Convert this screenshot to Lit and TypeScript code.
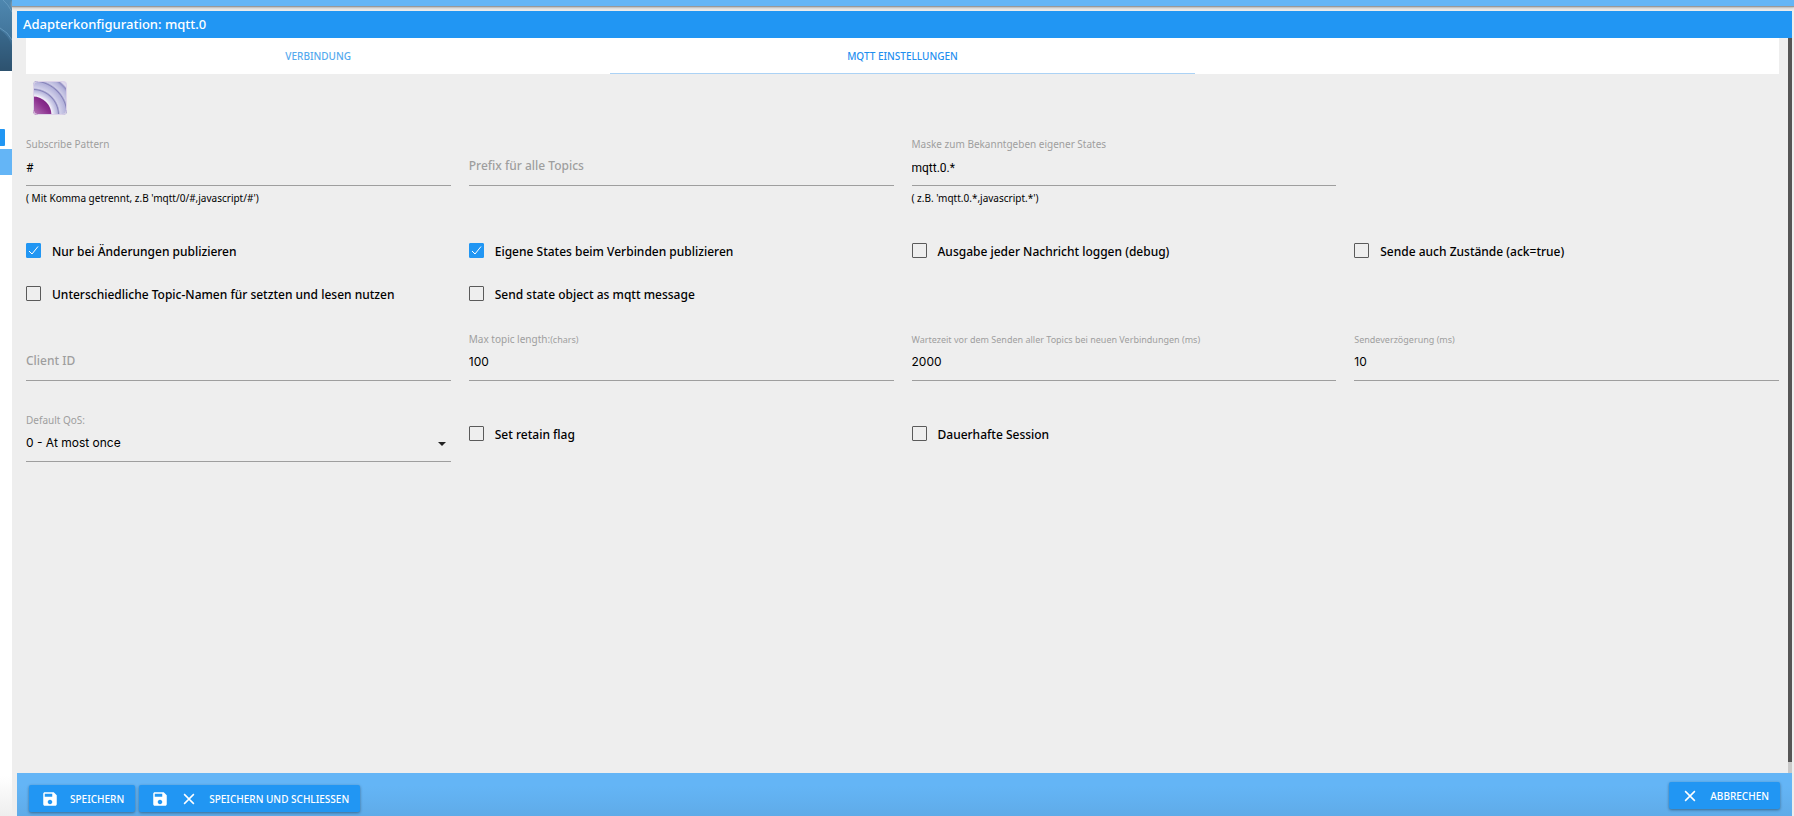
import { LitElement, html, css, nothing } from "lit";
import { customElement, property } from "lit/decorators.js";

const saveIcon = html`<svg class="icon" viewBox="0 0 24 24" aria-hidden="true">
  <path fill="#fff" d="M17 3H5c-1.110 0-2 .9-2 2v14c0 1.100.890 2 2 2h14c1.100 0 2-.9 2-2V7l-4-4zm-5 16c-1.660 0-3-1.340-3-3s1.340-3 3-3 3 1.340 3 3-1.340 3-3 3zm3-10H5V5h10v4z" />
</svg>`;

const closeIcon = html`<svg class="icon" viewBox="0 0 24 24" aria-hidden="true">
  <path fill="none" stroke="#fff" stroke-width="2" d="M5.500 5.500l13 13M18.500 5.500l-13 13" />
</svg>`;

const logo = html`<svg class="logo" viewBox="0 0 34 34" role="img" aria-label="MQTT">
  <defs>
    <clipPath id="tile"><rect width="34" height="34" rx="4" /></clipPath>
    <radialGradient id="waves" gradientUnits="userSpaceOnUse" cx="0" cy="34" r="50">
      <stop offset="0" stop-color="#f2f0f8" />
      <stop offset=".38" stop-color="#f2f0f8" />
      <stop offset=".42" stop-color="#d9d8ee" />
      <stop offset=".49" stop-color="#b9b8dd" />
      <stop offset=".51" stop-color="#8481b8" />
      <stop offset=".54" stop-color="#d2d1ea" />
      <stop offset=".66" stop-color="#b3b2da" />
      <stop offset=".68" stop-color="#8481b8" />
      <stop offset=".71" stop-color="#cccbe6" />
      <stop offset=".8" stop-color="#b3b2da" />
      <stop offset=".84" stop-color="#8f8cc0" />
      <stop offset=".87" stop-color="#e0dcee" />
      <stop offset="1" stop-color="#d5cfe6" />
    </radialGradient>
    <linearGradient id="core" x1="0" y1="1" x2="1" y2="0">
      <stop offset="0" stop-color="#b87cba" />
      <stop offset=".5" stop-color="#8c3190" />
      <stop offset="1" stop-color="#6a0f70" />
    </linearGradient>
  </defs>
  <g clip-path="url(#tile)">
    <rect width="34" height="34" fill="url(#waves)" />
    <path d="M0 15.500A18.500 18.500 0 0 1 18.500 34H0z" fill="url(#core)" />
    <rect x=".5" y=".5" width="33" height="33" rx="4" fill="none" stroke="#ddd3e8" stroke-width="1" />
  </g>
</svg>`;

interface Item {
  kind: "text" | "number" | "check" | "select";
  id: string;
  label: string;
  unit?: string;
  value?: string;
  help?: string;
  small?: boolean;
  checked?: boolean;
}

const rows: { name: string; items: Item[] }[] = [
  {
    name: "topics",
    items: [
      { kind: "text", id: "patterns", label: "Subscribe Pattern", value: "#", help: "( Mit Komma getrennt, z.B 'mqtt/0/#,javascript/#')" },
      { kind: "text", id: "prefix", label: "Prefix für alle Topics", value: "" },
      { kind: "text", id: "publish", label: "Maske zum Bekanntgeben eigener States", value: "mqtt.0.*", help: "( z.B. 'mqtt.0.*,javascript.*')" },
    ],
  },
  {
    name: "checks",
    items: [
      { kind: "check", id: "onchange", label: "Nur bei Änderungen publizieren", checked: true },
      { kind: "check", id: "publishAll", label: "Eigene States beim Verbinden publizieren", checked: true },
      { kind: "check", id: "debug", label: "Ausgabe jeder Nachricht loggen (debug)" },
      { kind: "check", id: "sendAck", label: "Sende auch Zustände (ack=true)" },
    ],
  },
  {
    name: "checks",
    items: [
      { kind: "check", id: "extraSet", label: "Unterschiedliche Topic-Namen für setzten und lesen nutzen" },
      { kind: "check", id: "stateObject", label: "Send state object as mqtt message" },
    ],
  },
  {
    name: "limits",
    items: [
      { kind: "text", id: "clientId", label: "Client ID", value: "" },
      { kind: "number", id: "maxTopic", label: "Max topic length:", unit: "(chars)", value: "100" },
      { kind: "number", id: "wait", label: "Wartezeit vor dem Senden aller Topics bei neuen Verbindungen (ms)", value: "2000", small: true },
      { kind: "number", id: "interval", label: "Sendeverzögerung (ms)", value: "10", small: true },
    ],
  },
  {
    name: "session",
    items: [
      { kind: "select", id: "qos", label: "Default QoS:" },
      { kind: "check", id: "retain", label: "Set retain flag" },
      { kind: "check", id: "persistent", label: "Dauerhafte Session" },
    ],
  },
];

@customElement("config-field")
export class ConfigField extends LitElement {
  @property({ attribute: false }) item!: Item;

  static styles = css`
    :host {
      display: block;
      min-width: 0;
    }
    .field {
      display: grid;
      grid-template-rows: 16px 34px auto;
    }
    .label {
      grid-area: 1 / 1;
      font-size: 10px;
      line-height: 17px;
      color: #9e9e9e;
      white-space: nowrap;
    }
    .small,
    .unit {
      font-size: 9px;
    }
    .empty .label {
      grid-area: 2 / 1;
      font-size: 12px;
      font-weight: 500;
      line-height: 28px;
      pointer-events: none;
    }
    .control {
      grid-area: 2 / 1;
      width: 100%;
      min-width: 0;
      height: 34px;
      box-sizing: border-box;
      margin: 0;
      padding: 0 0 2px;
      border: 0;
      border-bottom: 1px solid #9e9e9e;
      border-radius: 0;
      background: transparent;
      color: #000;
      font: 12px Roboto, sans-serif;
      outline: 0;
      appearance: none;
    }
    .number {
      padding-bottom: 4px;
      font-family: Inter, sans-serif;
    }
    .arrow {
      grid-area: 2 / 1;
      justify-self: end;
      align-self: center;
      width: 8px;
      height: 4px;
      margin: 0 5px 2px 0;
      pointer-events: none;
    }
    .help {
      grid-area: 3 / 1;
      margin-top: 4px;
      font-size: 10px;
      line-height: 17px;
      color: #000;
    }
    .check {
      display: flex;
      align-items: center;
      gap: 11px;
      height: 43px;
      font-size: 12px;
      font-weight: 500;
      color: #000;
    }
    .caption {
      padding-top: 2px;
      line-height: 16px;
    }
    .box {
      appearance: none;
      flex: none;
      width: 15px;
      height: 15px;
      box-sizing: border-box;
      margin: 0;
      border: 1px solid #5a5a5a;
      border-radius: 1px;
    }
    .box:checked {
      border-color: #2196f3;
      background: #2196f3
        url("data:image/svg+xml,%3Csvg xmlns='http://www.w3.org/2000/svg' viewBox='0 0 13 13'%3E%3Cpath d='M2 7l3 3 6-7.500' fill='none' stroke='white'/%3E%3C/svg%3E");
    }
  `;

  render() {
    const { kind, id, label, unit, value, help, small, checked } = this.item;
    if (kind === "check") {
      return html`<label class="check"
        ><input class="box" type="checkbox" id=${id} .checked=${!!checked} /><span class="caption">${label}</span></label
      >`;
    }
    const empty = kind !== "select" && !value;
    return html`<div class="field ${empty ? "empty" : ""}">
      ${kind === "select"
        ? html`<select class="control number" id=${id}>
              <option>0 - At most once</option>
              <option>1 - At least once</option>
              <option>2 - Exactly once</option>
            </select>
            <svg class="arrow" viewBox="0 0 8 4" aria-hidden="true"><path d="M0 0h8L4 4z" fill="#222" /></svg>`
        : html`<input class="control ${kind}" type="text" inputmode=${kind === "number" ? "numeric" : "text"} id=${id} .value=${value ?? ""} />`}
      <label class="label ${small ? "small" : ""}" for=${id}>${label}${unit ? html`<span class="unit">${unit}</span>` : nothing}</label>
      ${help ? html`<div class="help">${help}</div>` : nothing}
    </div>`;
  }
}

@customElement("app-root")
export class AppRoot extends LitElement {
  static styles = css`
    :host {
      display: flex;
      height: 100vh;
      overflow: hidden;
      font-family: "Noto Sans", sans-serif;
      background: #eee;
    }
    .strip {
      flex: none;
      display: flex;
      flex-direction: column;
      width: 12px;
      background: linear-gradient(#fff calc(100% - 40px), #eee);
    }
    .photo {
      width: 12px;
      height: 71px;
    }
    .tab-mark {
      width: 5px;
      height: 17px;
      margin: 58px 0 3px;
      border-radius: 0 1px 1px 0;
      background: #2196f3;
    }
    .row-mark {
      height: 26px;
      background: #64b5f6;
    }
    .page {
      flex: 1;
      min-width: 0;
      display: flex;
      flex-direction: column;
    }
    .topbar {
      height: 6px;
      margin-bottom: 5px;
      background: #64b5f6;
      box-shadow: 0 1px 1px #999, 0 2px 3px #bbb;
    }
    .dialog {
      flex: 1;
      min-height: 0;
      display: flex;
      flex-direction: column;
      margin: 0 2px 0 5px;
    }
    .title {
      margin: 0;
      padding: 0 6px;
      background: #2196f3;
      color: #fff;
      font-size: 13px;
      font-weight: 500;
      line-height: 27px;
    }
    .body {
      flex: 1;
      min-height: 0;
      display: flex;
    }
    .content {
      flex: 1;
      min-width: 0;
      padding: 0 9px;
    }
    .scroll {
      width: 4px;
      padding-bottom: 11px;
      box-sizing: border-box;
      background: #c9c9c9;
    }
    .thumb {
      height: 100%;
      background: #555;
    }
    .tabs {
      display: grid;
      grid-template-columns: repeat(3, 1fr);
      background: #fff;
    }
    .tab {
      height: 36px;
      box-sizing: border-box;
      padding: 1px 0 0;
      border-bottom: 1px solid transparent;
      color: #54a9ee;
      font-size: 10px;
      font-weight: 500;
      line-height: 35px;
      text-align: center;
      text-decoration: none;
      text-transform: uppercase;
    }
    .active {
      border-color: #abd2f5;
      color: #1f8fef;
    }
    .logo {
      display: block;
      width: 34px;
      height: 34px;
      margin: 7px 7px 21px;
    }
    .row {
      display: grid;
      grid-template-columns: repeat(4, minmax(0, 1fr));
      column-gap: 18px;
      align-items: start;
    }
    .topics {
      margin-bottom: 22px;
    }
    .limits {
      margin: 16px 0 31px;
    }
    .footer {
      display: flex;
      gap: 4px;
      height: 43px;
      box-sizing: border-box;
      padding: 9px 12px 0;
      background: linear-gradient(#64b5f6 30%, #5fabe8);
    }
    .btn {
      display: flex;
      align-items: center;
      gap: 11px;
      height: 27px;
      padding: 0 11px 0 12px;
      margin-top: 3px;
      border: 0;
      border-radius: 2px;
      background: #2196f3;
      box-shadow: 0 1px 3px rgba(0, 0, 0, 0.4);
      color: #fff;
      font: 500 10px "Noto Sans", sans-serif;
      text-transform: uppercase;
    }
    .cancel {
      margin: 0 0 0 auto;
    }
    .icon {
      width: 18px;
      height: 18px;
    }
  `;

  render() {
    return html`
      <aside class="strip">
        <svg class="photo" viewBox="0 0 12 71" aria-hidden="true">
          <defs>
            <linearGradient id="night" x1="0" y1="0" x2="0" y2="1">
              <stop offset="0" stop-color="#4e87af" />
              <stop offset=".5" stop-color="#42759b" />
              <stop offset="1" stop-color="#2d4c66" />
            </linearGradient>
          </defs>
          <rect width="12" height="71" fill="url(#night)" />
          <path d="M0 30Q8 35 12 46V71H0z" fill="#2e5878" opacity=".5" />
          <path d="M0 28Q8 32 12 40M3 0Q8 4 12 12" fill="none" stroke="#6fa3c6" opacity=".7" />
        </svg>
        <div class="tab-mark"></div>
        <div class="row-mark"></div>
      </aside>
      <div class="page">
        <div class="topbar"></div>
        <main class="dialog">
          <h1 class="title">Adapterkonfiguration: mqtt.0</h1>
          <div class="body">
            <div class="content">
              <nav class="tabs">
                <a class="tab" href="#connection">Verbindung</a>
                <a class="tab active" href="#settings">MQTT Einstellungen</a>
              </nav>
              ${logo}
              ${rows.map(
                (row) => html`<div class="row ${row.name}">
                  ${row.items.map((item) => html`<config-field .item=${item}></config-field>`)}
                </div>`,
              )}
            </div>
            <div class="scroll"><div class="thumb"></div></div>
          </div>
          <footer class="footer">
            <button class="btn" type="button">${saveIcon}Speichern</button>
            <button class="btn" type="button">${saveIcon}${closeIcon}Speichern und schliessen</button>
            <button class="btn cancel" type="button">${closeIcon}Abbrechen</button>
          </footer>
        </main>
      </div>
    `;
  }
}
